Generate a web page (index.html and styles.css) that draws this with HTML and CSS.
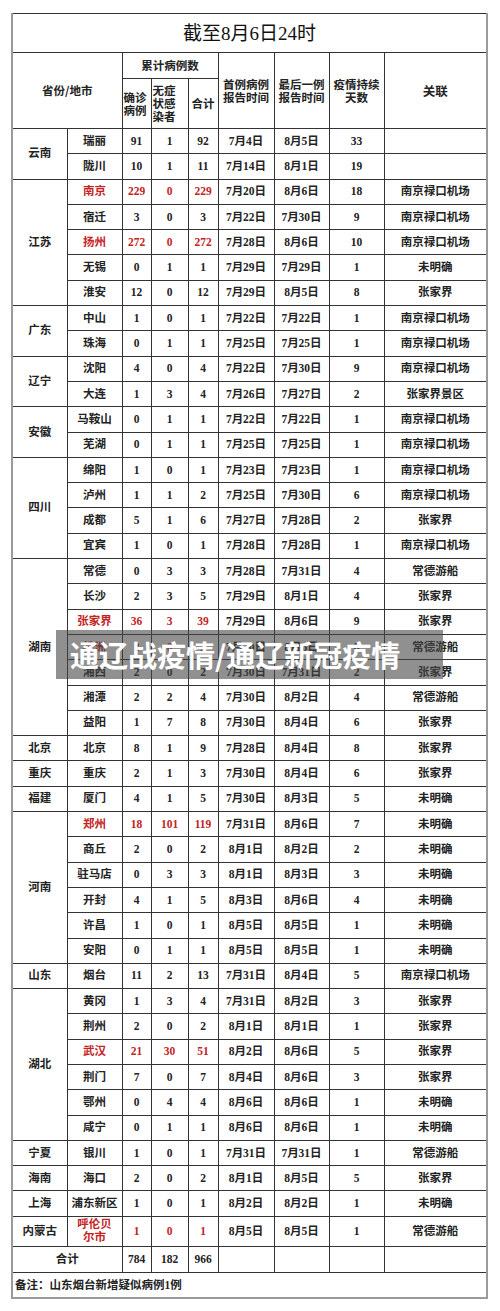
FILE: index.html
```html
<!DOCTYPE html>
<html lang="zh-CN">
<head>
<meta charset="utf-8">
<title>截至8月6日24时</title>
<link rel="stylesheet" href="styles.css">
</head>
<body>
<div class="page">
<table class="tbl">
<colgroup>
<col class="c-prov"><col class="c-city"><col class="c-conf"><col class="c-asym"><col class="c-sum"><col class="c-first"><col class="c-last"><col class="c-days"><col class="c-rel">
</colgroup>
<thead>
<tr class="r-title"><th colspan="9" class="title">截至8月6日24时</th></tr>
<tr class="r-h1">
<th colspan="2" rowspan="2">省份/地市</th>
<th colspan="3">累计病例数</th>
<th rowspan="2">首例病例<br>报告时间</th>
<th rowspan="2">最后一例<br>报告时间</th>
<th rowspan="2">疫情持续<br>天数</th>
<th rowspan="2" class="rel-h">关联</th>
</tr>
<tr class="r-h2">
<th class="hl">确诊<br>病例</th>
<th class="hl">无症<br>状感<br>染者</th>
<th>合计</th>
</tr>
</thead>
<tbody>
<tr><td rowspan="2">云南</td><td>瑞丽</td><td>91</td><td>1</td><td>92</td><td>7月4日</td><td>8月5日</td><td>33</td><td></td></tr>
<tr><td>陇川</td><td>10</td><td>1</td><td>11</td><td>7月14日</td><td>8月1日</td><td>19</td><td></td></tr>

<tr><td rowspan="5">江苏</td><td class="r">南京</td><td class="r">229</td><td class="r">0</td><td class="r">229</td><td>7月20日</td><td>8月6日</td><td>18</td><td>南京禄口机场</td></tr>
<tr><td>宿迁</td><td>3</td><td>0</td><td>3</td><td>7月22日</td><td>7月30日</td><td>9</td><td>南京禄口机场</td></tr>
<tr><td class="r">扬州</td><td class="r">272</td><td class="r">0</td><td class="r">272</td><td>7月28日</td><td>8月6日</td><td>10</td><td>南京禄口机场</td></tr>
<tr><td>无锡</td><td>0</td><td>1</td><td>1</td><td>7月29日</td><td>7月29日</td><td>1</td><td>未明确</td></tr>
<tr><td>淮安</td><td>12</td><td>0</td><td>12</td><td>7月29日</td><td>8月5日</td><td>8</td><td>张家界</td></tr>

<tr><td rowspan="2">广东</td><td>中山</td><td>1</td><td>0</td><td>1</td><td>7月22日</td><td>7月22日</td><td>1</td><td>南京禄口机场</td></tr>
<tr><td>珠海</td><td>0</td><td>1</td><td>1</td><td>7月25日</td><td>7月25日</td><td>1</td><td>南京禄口机场</td></tr>

<tr><td rowspan="2">辽宁</td><td>沈阳</td><td>4</td><td>0</td><td>4</td><td>7月22日</td><td>7月30日</td><td>9</td><td>南京禄口机场</td></tr>
<tr><td>大连</td><td>1</td><td>3</td><td>4</td><td>7月26日</td><td>7月27日</td><td>2</td><td>张家界景区</td></tr>

<tr><td rowspan="2">安徽</td><td>马鞍山</td><td>0</td><td>1</td><td>1</td><td>7月22日</td><td>7月22日</td><td>1</td><td>南京禄口机场</td></tr>
<tr><td>芜湖</td><td>0</td><td>1</td><td>1</td><td>7月25日</td><td>7月25日</td><td>1</td><td>南京禄口机场</td></tr>

<tr><td rowspan="4">四川</td><td>绵阳</td><td>1</td><td>0</td><td>1</td><td>7月23日</td><td>7月23日</td><td>1</td><td>南京禄口机场</td></tr>
<tr><td>泸州</td><td>1</td><td>1</td><td>2</td><td>7月25日</td><td>7月30日</td><td>6</td><td>南京禄口机场</td></tr>
<tr><td>成都</td><td>5</td><td>1</td><td>6</td><td>7月27日</td><td>7月28日</td><td>2</td><td>张家界</td></tr>
<tr><td>宜宾</td><td>1</td><td>0</td><td>1</td><td>7月28日</td><td>7月28日</td><td>1</td><td>南京禄口机场</td></tr>

<tr><td rowspan="7">湖南</td><td>常德</td><td>0</td><td>3</td><td>3</td><td>7月28日</td><td>7月31日</td><td>4</td><td>常德游船</td></tr>
<tr><td>长沙</td><td>2</td><td>3</td><td>5</td><td>7月29日</td><td>8月1日</td><td>4</td><td>张家界</td></tr>
<tr><td class="r">张家界</td><td class="r">36</td><td class="r">3</td><td class="r">39</td><td>7月29日</td><td>8月6日</td><td>9</td><td>张家界</td></tr>
<tr><td class="r">株洲</td><td class="r">2</td><td class="r">0</td><td class="r">2</td><td>7月30日</td><td>8月6日</td><td>8</td><td>常德游船</td></tr>
<tr><td>湘西</td><td>2</td><td>0</td><td>2</td><td>7月30日</td><td>7月31日</td><td>2</td><td>张家界</td></tr>
<tr><td>湘潭</td><td>2</td><td>2</td><td>4</td><td>7月30日</td><td>8月2日</td><td>4</td><td>常德游船</td></tr>
<tr><td>益阳</td><td>1</td><td>7</td><td>8</td><td>7月30日</td><td>8月4日</td><td>6</td><td>张家界</td></tr>

<tr><td>北京</td><td>北京</td><td>8</td><td>1</td><td>9</td><td>7月28日</td><td>8月4日</td><td>8</td><td>张家界</td></tr>
<tr><td>重庆</td><td>重庆</td><td>2</td><td>1</td><td>3</td><td>7月30日</td><td>8月4日</td><td>6</td><td>张家界</td></tr>
<tr><td>福建</td><td>厦门</td><td>4</td><td>1</td><td>5</td><td>7月30日</td><td>8月3日</td><td>5</td><td>未明确</td></tr>

<tr><td rowspan="6">河南</td><td class="r">郑州</td><td class="r">18</td><td class="r">101</td><td class="r">119</td><td>7月31日</td><td>8月6日</td><td>7</td><td>未明确</td></tr>
<tr><td>商丘</td><td>2</td><td>0</td><td>2</td><td>8月1日</td><td>8月2日</td><td>2</td><td>未明确</td></tr>
<tr><td>驻马店</td><td>0</td><td>3</td><td>3</td><td>8月1日</td><td>8月3日</td><td>3</td><td>未明确</td></tr>
<tr><td>开封</td><td>4</td><td>1</td><td>5</td><td>8月3日</td><td>8月6日</td><td>4</td><td>未明确</td></tr>
<tr><td>许昌</td><td>1</td><td>0</td><td>1</td><td>8月5日</td><td>8月5日</td><td>1</td><td>未明确</td></tr>
<tr><td>安阳</td><td>0</td><td>1</td><td>1</td><td>8月5日</td><td>8月5日</td><td>1</td><td>未明确</td></tr>

<tr><td>山东</td><td>烟台</td><td>11</td><td>2</td><td>13</td><td>7月31日</td><td>8月4日</td><td>5</td><td>南京禄口机场</td></tr>

<tr><td rowspan="6">湖北</td><td>黄冈</td><td>1</td><td>3</td><td>4</td><td>7月31日</td><td>8月2日</td><td>3</td><td>张家界</td></tr>
<tr><td>荆州</td><td>2</td><td>0</td><td>2</td><td>8月1日</td><td>8月1日</td><td>1</td><td>张家界</td></tr>
<tr><td class="r">武汉</td><td class="r">21</td><td class="r">30</td><td class="r">51</td><td>8月2日</td><td>8月6日</td><td>5</td><td>张家界</td></tr>
<tr><td>荆门</td><td>7</td><td>0</td><td>7</td><td>8月4日</td><td>8月6日</td><td>3</td><td>张家界</td></tr>
<tr><td>鄂州</td><td>0</td><td>4</td><td>4</td><td>8月6日</td><td>8月6日</td><td>1</td><td>未明确</td></tr>
<tr><td>咸宁</td><td>0</td><td>1</td><td>1</td><td>8月6日</td><td>8月6日</td><td>1</td><td>未明确</td></tr>

<tr><td>宁夏</td><td>银川</td><td>1</td><td>0</td><td>1</td><td>7月31日</td><td>7月31日</td><td>1</td><td>常德游船</td></tr>
<tr><td>海南</td><td>海口</td><td>2</td><td>0</td><td>2</td><td>8月1日</td><td>8月5日</td><td>5</td><td>张家界</td></tr>
<tr><td>上海</td><td>浦东新区</td><td>1</td><td>0</td><td>1</td><td>8月2日</td><td>8月2日</td><td>1</td><td>未明确</td></tr>
<tr class="tall"><td>内蒙古</td><td class="r">呼伦贝<br>尔市</td><td class="r">1</td><td class="r">0</td><td class="r">1</td><td>8月5日</td><td>8月5日</td><td>1</td><td>常德游船</td></tr>

<tr class="total"><td colspan="2">合计</td><td>784</td><td>182</td><td>966</td><td></td><td></td><td></td><td></td></tr>
<tr class="note"><td colspan="9">备注：山东烟台新增疑似病例1例</td></tr>
</tbody>
</table>
<div class="watermark">通辽战疫情/通辽新冠疫情</div>
</div>
</body>
</html>
```
FILE: styles.css
```css
html, body {
  margin: 0;
  padding: 0;
  background: #fff;
}
.page {
  position: relative;
  width: 500px;
  height: 1311px;
  padding: 13px 0 0 11px;
  box-sizing: border-box;
}
.tbl {
  border-collapse: collapse;
  table-layout: fixed;
  width: 475px;
  font-family: "Liberation Serif", "Noto Sans CJK SC", serif;
  font-weight: 700;
  font-size: 12px;
  color: #222;
  border-left: 2px solid #9a9a9a;
  border-right: 2px solid #9a9a9a;
  border-bottom: 2px solid #9a9a9a;
  border-top: 1px solid #333;
}
.c-prov { width: 55px; }
.c-city { width: 55px; }
.c-conf { width: 29px; }
.c-asym { width: 37px; }
.c-sum { width: 30px; }
.c-first { width: 56px; }
.c-last { width: 55px; }
.c-days { width: 55px; }
.c-rel { width: 103px; }
.tbl th, .tbl td {
  border: 1px solid #333;
  padding: 0;
  text-align: center;
  vertical-align: middle;
  line-height: 13px;
  overflow: hidden;
  white-space: nowrap;
}
.tbl th {
  font-family: "Noto Sans CJK SC", sans-serif;
  font-weight: 700;
  font-size: 11.5px;
}
.tbl td {
  font-size: 11.5px;
}
.tbl .title {
  font-family: "Liberation Serif", "Noto Sans CJK SC", serif;
  font-weight: 400;
  font-size: 19px;
  color: #111;
}
.r-title { height: 39px; }
.r-h1 { height: 26px; }
.r-h2 { height: 50px; }
.tbl .hl { text-align: left; padding-left: 1px; }
.tbl .rel-h { font-size: 12.5px; }
tbody tr { height: 25.3px; }
tbody tr.tall { height: 30px; }
tbody tr.total { height: 26px; }
tbody tr.note { height: 26px; }
.tbl td.r { color: #c4231f; }
.tbl .note td {
  text-align: left;
  padding-left: 2px;
}
.watermark {
  position: absolute;
  left: 56px;
  top: 630px;
  width: 387px;
  height: 49px;
  box-sizing: border-box;
  padding-left: 14px;
  background: rgba(70, 70, 70, 0.6);
  color: #fff;
  font-family: "Noto Sans CJK SC", sans-serif;
  font-weight: 700;
  font-size: 29px;
  line-height: 49px;
  white-space: nowrap;
}
```
